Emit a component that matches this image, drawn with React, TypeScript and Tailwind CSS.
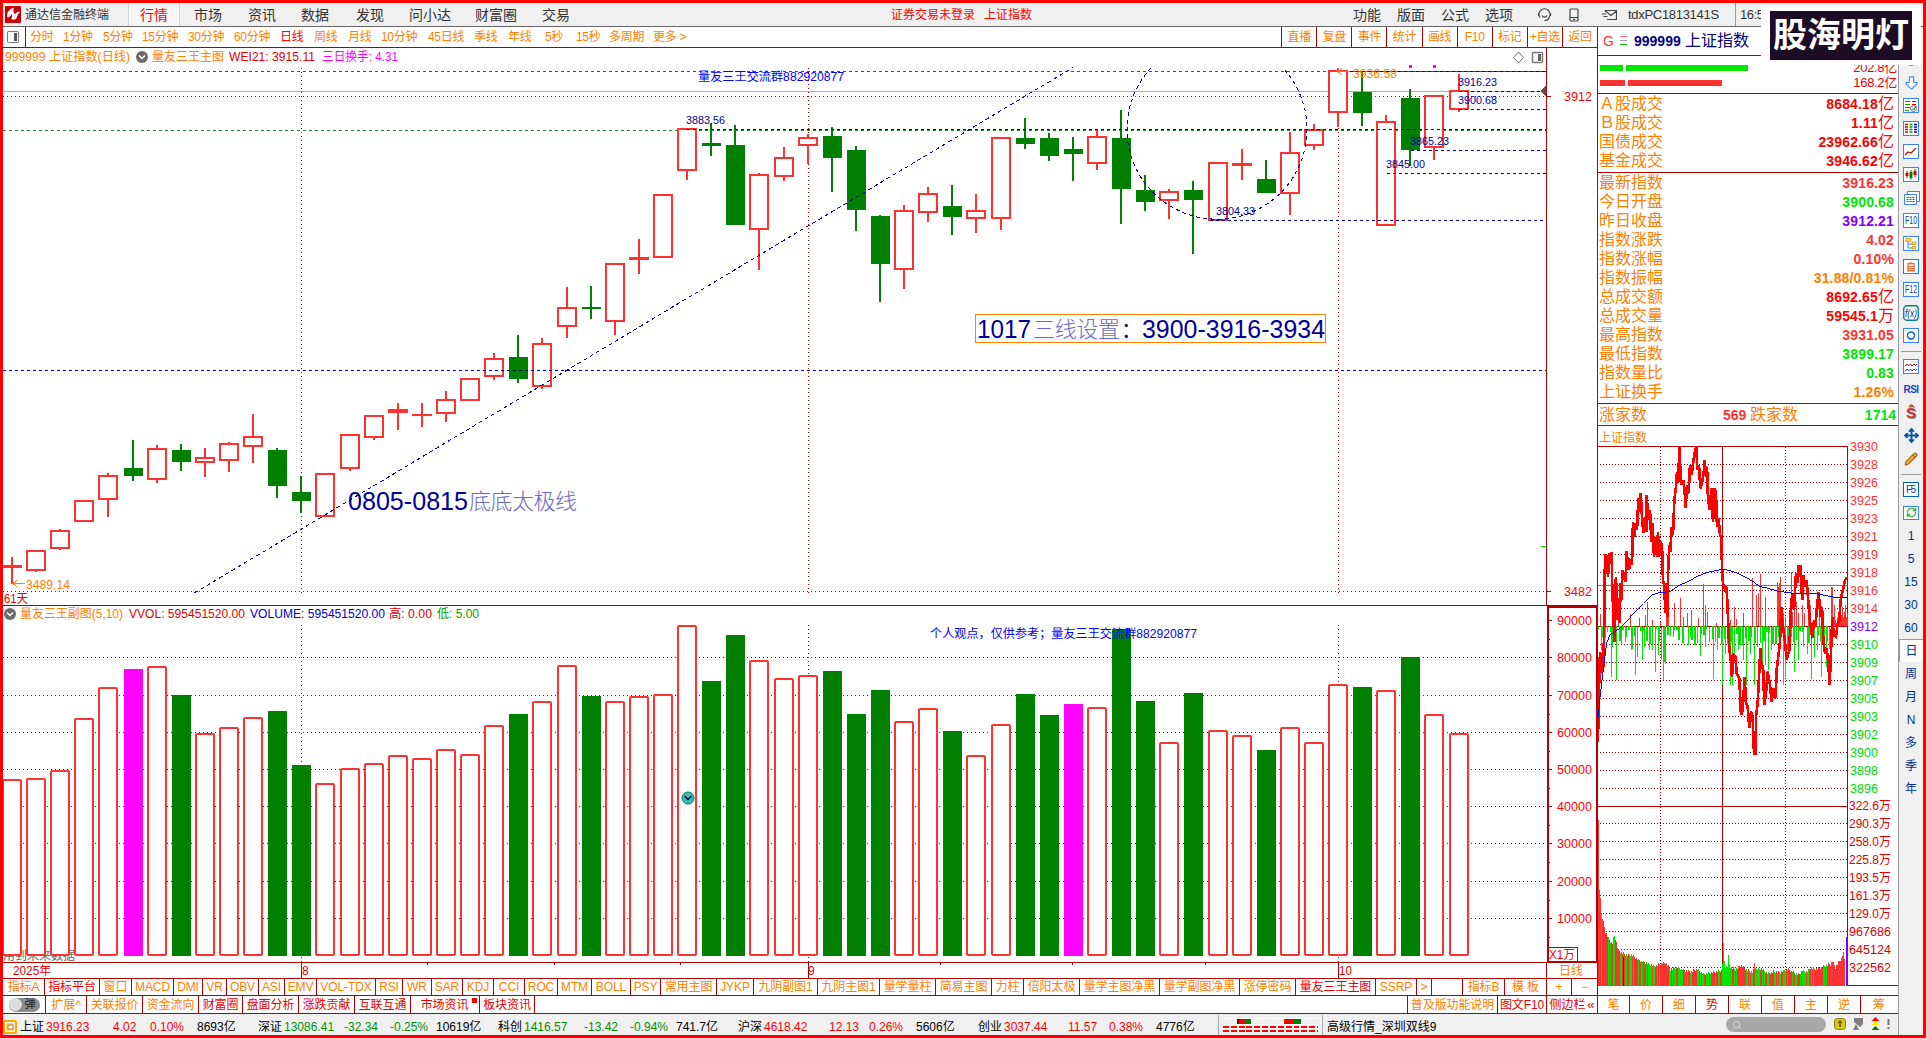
import type { ReactNode } from 'react';
import { ArrowBigDown, ArrowBigUp, Move, Pencil, RefreshCw, Search } from 'lucide-react';

const RED = '#ff3232';
const GREEN = '#008000';
const GRID = '#b00000';
const NAVY = '#000099';
const ORANGE = '#ff8000';

type Candle = [color: 'r' | 'g', top: number, bottom: number, high: number, low: number];

const CANDLES: Candle[] = [
  ['r', 565, 568, 557, 584], ['r', 550, 571, 550, 572], ['r', 530, 549, 529, 550], ['r', 500, 522, 500, 522],
  ['r', 475, 500, 473, 517], ['g', 468, 476, 440, 481], ['r', 448, 480, 445, 483], ['g', 450, 462, 444, 471],
  ['r', 457, 463, 448, 477], ['r', 443, 461, 442, 472], ['r', 436, 447, 414, 463], ['g', 450, 486, 448, 498],
  ['g', 492, 501, 476, 513], ['r', 473, 517, 473, 517], ['r', 434, 469, 434, 471], ['r', 415, 438, 415, 440],
  ['r', 409, 413, 403, 430], ['r', 414, 416, 403, 427], ['r', 399, 414, 391, 422], ['r', 378, 401, 378, 401],
  ['r', 358, 377, 353, 380], ['g', 357, 379, 335, 383], ['r', 343, 387, 338, 389], ['r', 307, 327, 287, 338],
  ['g', 307, 309, 286, 319], ['r', 263, 322, 263, 335], ['r', 257, 260, 239, 274], ['r', 194, 258, 194, 258],
  ['r', 128, 171, 128, 180], ['g', 143, 146, 123, 156], ['g', 145, 225, 125, 225], ['r', 174, 230, 173, 270],
  ['r', 157, 177, 147, 181], ['r', 137, 146, 134, 164], ['g', 136, 158, 127, 192], ['g', 150, 210, 146, 231],
  ['g', 216, 264, 215, 302], ['r', 210, 270, 205, 289], ['r', 193, 213, 187, 222], ['g', 206, 217, 185, 235],
  ['r', 210, 219, 194, 233], ['r', 137, 219, 137, 230], ['g', 138, 144, 118, 149], ['g', 138, 156, 133, 161],
  ['g', 149, 154, 137, 181], ['r', 136, 164, 130, 170], ['g', 138, 189, 110, 224], ['g', 190, 202, 175, 211],
  ['r', 191, 201, 189, 219], ['g', 190, 200, 181, 254], ['r', 162, 221, 162, 221], ['r', 163, 166, 149, 180],
  ['g', 179, 193, 160, 193], ['r', 152, 194, 132, 215], ['r', 129, 146, 124, 150], ['r', 70, 113, 68, 127],
  ['g', 92, 113, 71, 126], ['r', 121, 226, 115, 226], ['g', 98, 150, 89, 166], ['r', 95, 148, 95, 160],
  ['r', 90, 110, 74, 112],
];

// tops of the volume columns
const VOLUMES = [
  779, 778, 770, 718, 687, 669, 666, 695, 733, 727, 717, 711, 765, 783, 768, 763, 755, 758, 749, 754,
  725, 714, 701, 665, 696, 701, 696, 694, 625, 681, 635, 660, 678, 675, 671, 714, 690, 721, 708, 731,
  755, 724, 694, 715, 704, 707, 629, 701, 742, 693, 730, 735, 750, 727, 742, 684, 687, 690, 657, 714,
  733,
];
const MAGENTA_BARS = [5, 44];

const cx = (i: number) => Math.round(12 + 24.11 * i);

function Label({ x, y, w, fill, size = 12, children }: {
  x: number; y: number; w?: number; fill: string; size?: number; children: ReactNode;
}) {
  return (
    <text x={x} y={y + size * 0.36} fill={fill} fontSize={size} textLength={w} lengthAdjust="spacingAndGlyphs">
      {children}
    </text>
  );
}

function Dash({ x1, x2 = 1546, y, color = NAVY }: { x1: number; x2?: number; y: number; color?: string }) {
  return <path d={`M${x1} ${y + 0.5}H${x2}`} stroke={color} strokeDasharray="3 3" />;
}

function Collapse({ x, y }: { x: number; y: number }) {
  return (
    <g shapeRendering="auto">
      <circle cx={x} cy={y} r={6} fill="#6b6b6b" />
      <path d={`M${x - 3} ${y - 1.5}l3 3 3-3`} fill="none" stroke="#fff" strokeWidth={1.5} />
    </g>
  );
}

function PriceChart() {
  return (
    <svg className="block" width={1594} height={557} viewBox="3 48 1594 557" shapeRendering="crispEdges">
      <Label x={5} y={57} w={125} fill={ORANGE}>999999 上证指数(日线)</Label>
      <Collapse x={142} y={57} />
      <Label x={152} y={57} w={72} fill={ORANGE}>量友三王主图</Label>
      <Label x={229} y={57} w={86} fill="#e00000">WEI21: 3915.11</Label>
      <Label x={322} y={57} w={76} fill="#ff00ff">三日换手: 4.31</Label>

      <path d="M1518.5 52l5 5.5-5 5.5-5-5.5z" fill="none" stroke="#666" shapeRendering="auto" />
      <rect x={1532.5} y={52.5} width={10} height={10} rx={1} fill="none" stroke="#777" strokeWidth={1.5} shapeRendering="auto" />
      <rect x={1538} y={54} width={3} height={7} fill="#666" />

      <path d="M3 91.5H1546" stroke="#b0b0b0" />
      <path d="M3 96.5H1546M3 591.5H1546M301.5 68V593M808.5 68V593M1338.5 68V593" stroke={GRID} strokeDasharray="1 3" />
      <Dash x1={3} y={71} color="#b400b4" />
      <Dash x1={3} y={130} color="#2a8a2a" />

      {CANDLES.map(([color, top, bottom, high, low], i) => {
        const x = cx(i);
        const h = bottom - top;
        if (color === 'g') {
          return (
            <g key={i} fill={GREEN}>
              <rect x={x - 1} y={high} width={2} height={low - high} />
              <rect x={x - 9} y={top} width={19} height={h} />
            </g>
          );
        }
        return (
          <g key={i}>
            <rect x={x - 1} y={high} width={2} height={low - high} fill={RED} />
            {h < 5
              ? <rect x={x - 10} y={top} width={20} height={h} fill={RED} />
              : <rect x={x - 9} y={top + 1} width={18} height={h - 2} fill="#fff" stroke={RED} strokeWidth={2} />}
          </g>
        );
      })}

      <Dash x1={3} y={370} />
      <Dash x1={687} y={129} />
      <Dash x1={1210} y={220} />
      <Dash x1={1338} y={71} />
      <Dash x1={1459} y={91} />
      <Dash x1={1459} y={109} />
      <Dash x1={1411} y={150} />
      <Dash x1={1387} y={173} />
      <path d="M194.5 593L1073 67.5" stroke={NAVY} strokeDasharray="4 3.2" />
      <path d="M1151 68A90 90 0 1 0 1283 68" fill="none" stroke={NAVY} strokeDasharray="4 3.2" />

      <Label x={698} y={77} w={146} fill="#0000ff">量友三王交流群882920877</Label>
      <Label x={686} y={120} w={39} fill={NAVY} size={11}>3883.56</Label>
      <Label x={1216} y={211} w={39} fill={NAVY} size={11}>3804.33</Label>
      <Label x={1458} y={82} w={39} fill={NAVY} size={11}>3916.23</Label>
      <Label x={1458} y={100} w={39} fill={NAVY} size={11}>3900.68</Label>
      <Label x={1410} y={141} w={39} fill={NAVY} size={11}>3865.23</Label>
      <Label x={1386} y={164} w={39} fill={NAVY} size={11}>3845.00</Label>
      <path d="M1350 71.5H1338M1342 68l-4 3.5 4 3.5" fill="none" stroke={ORANGE} />
      <Label x={1353} y={74} w={44} fill={ORANGE}>3936.58</Label>
      <rect x={1409} y={65} width={3} height={3} fill="#ff00ff" />
      <rect x={1433} y={65} width={3} height={3} fill="#ff00ff" />

      <text x={348} y={510} fill={NAVY} fontSize={25} textLength={120} lengthAdjust="spacingAndGlyphs">0805-0815</text>
      <text x={469} y={509} fill="#6a6ac4" fontSize={22} fontWeight={300} textLength={108}>底底太极线</text>
      <rect x={975.5} y={314.5} width={350} height={28} fill="#fff" stroke={ORANGE} />
      <text x={977} y={338} fill={NAVY} fontSize={25} textLength={54} lengthAdjust="spacingAndGlyphs">1017</text>
      <text x={1033} y={337} fill="#6a6ac4" fontSize={22} fontWeight={300} textLength={87}>三线设置</text>
      <text x={1121} y={337} fill={NAVY} fontSize={21}>：</text>
      <text x={1142} y={338} fill={NAVY} fontSize={25} textLength={183} lengthAdjust="spacingAndGlyphs">3900-3916-3934</text>

      <path d="M25 583.5H13M17 580l-4 3.5 4 3.5" fill="none" stroke={ORANGE} />
      <Label x={26} y={585} w={44} fill={ORANGE}>3489.14</Label>
      <Label x={4} y={599} w={24} fill="#e00000">61天</Label>

      <path d="M1546 85v12l-5-6z" fill="#555" />
      <path d="M1541 546.5h5" stroke="#00e600" />
      <path d="M1546.5 48V605M1546 96.5h5M1546 591.5h5" stroke={GRID} />
      <Label x={1564} y={97} w={28} fill="#ff0000">3912</Label>
      <Label x={1564} y={592} w={28} fill="#ff0000">3482</Label>
    </svg>
  );
}

function VolumeChart() {
  return (
    <svg className="block" width={1594} height={373} viewBox="3 605 1594 373" shapeRendering="crispEdges">
      <Collapse x={10} y={614} />
      <Label x={20} y={614} w={103} fill={ORANGE}>量友三王副图(5,10)</Label>
      <Label x={129} y={614} w={116} fill="#e00000">VVOL: 595451520.00</Label>
      <Label x={250} y={614} w={135} fill="#0000d0">VOLUME: 595451520.00</Label>
      <Label x={389} y={614} w={43} fill="#e00000">高: 0.00</Label>
      <Label x={437} y={614} w={42} fill="#00a000">低: 5.00</Label>

      <path d="M301.5 625V962M808.5 625V962M1338.5 625V962" stroke={GRID} strokeDasharray="1 3" />
      {[1, 2, 3, 4, 5, 6, 7, 8].map((n) => (
        <path key={n} d={`M3 ${Math.round(955 - n * 37.2)}.5H1546`} stroke={GRID} strokeDasharray="1 3" />
      ))}
      <Label x={3} y={956} w={72} fill="#666">用到未来数据</Label>

      {VOLUMES.map((top, i) => {
        const x = cx(i);
        if (MAGENTA_BARS.includes(i)) return <rect key={i} x={x - 9} y={top} width={19} height={956 - top} fill="#ff00ff" />;
        if (CANDLES[i][0] === 'g') return <rect key={i} x={x - 9} y={top} width={19} height={956 - top} fill={GREEN} />;
        return <rect key={i} x={x - 9} y={top + 1} width={18} height={954 - top} rx={1} fill="#fff" stroke={RED} strokeWidth={2} shapeRendering="auto" />;
      })}

      <circle cx={688} cy={798} r={6} fill="#2fc4b0" stroke="#0b6d62" shapeRendering="auto" />
      <path d="M684.5 796l3.5 3.5 3.5-3.5" fill="none" stroke="#000033" strokeWidth={1.5} shapeRendering="auto" />
      <Label x={930} y={634} w={267} fill="#0000ff">个人观点，仅供参考；量友三王交流群882920877</Label>

      <path d="M3 605.5H1597" stroke={GRID} />
      <rect x={1548} y={607} width={49} height={355} fill="none" stroke={GRID} strokeWidth={2} />
      {[9, 8, 7, 6, 5, 4, 3, 2, 1].map((n) => {
        const y = Math.round(955 - n * 37.2);
        return (
          <g key={n}>
            <path d={`M1549 ${y}.5h3M1549 ${y + 19}.5h1`} stroke={GRID} />
            <Label x={1557} y={y + 0.5} w={35} fill="#ff0000">{n * 10000}</Label>
          </g>
        );
      })}
      <rect x={1548.5} y={947.5} width={29} height={14} fill="#fff" stroke={GRID} />
      <Label x={1549} y={955} w={26} fill="#ff0000">X1万</Label>

      <path d="M3 962.5H1597M301.5 962V978M808.5 962V978M1338.5 962V978M1546.5 962V978" stroke={GRID} />
      <path d="M427.5 963v2M554.5 963v2M680.5 963v2M940.5 963v2M1072.5 963v2M1205.5 963v2" stroke={GRID} />
      <Label x={13} y={971} w={38} fill="#e00000">2025年</Label>
      <Label x={302} y={971} fill="#e00000">8</Label>
      <Label x={808} y={971} fill="#e00000">9</Label>
      <Label x={1339} y={971} w={13} fill="#e00000">10</Label>
      <Label x={1559} y={971} w={24} fill={ORANGE}>日线</Label>
    </svg>
  );
}

// intraday curves are kept at three units per pixel, origin 1580,420
const PRICE_LINE =
  '53,967 56,890 58,760 60,695 64,760 68,700 70,740 73,600 75,402 78,455 80,405 84,470 88,398 92,432 95,395 97,520 99,555 101,600 103,665 105,520 108,470 110,545 113,600 116,535 119,610 122,490 125,540 127,450 131,480 134,455 137,485 140,392 144,440 147,450 151,425 156,435 159,305 163,350 167,310 171,330 175,235 179,275 182,218 186,290 190,340 195,290 199,335 200,225 205,300 210,270 214,365 218,310 222,410 226,350 231,410 234,335 237,410 242,365 246,375 249,480 253,500 256,580 260,490 262,590 264,460 268,375 271,395 275,320 279,345 283,240 288,200 291,155 295,185 298,80 301,150 305,195 310,180 314,215 317,265 321,195 326,220 330,135 335,165 340,125 345,95 349,80 352,150 357,135 361,205 367,185 371,160 374,120 378,170 381,140 384,235 389,270 394,205 399,305 404,205 408,220 411,320 416,295 420,345 424,355 426,440 429,490 436,510 440,500 443,570 445,620 448,690 452,715 456,770 461,705 466,710 470,760 478,775 483,885 488,870 494,770 498,850 503,860 508,925 513,875 518,890 522,1000 527,1000 528,890 533,850 537,770 541,685 545,745 549,735 553,855 558,820 563,755 570,795 575,845 580,805 585,830 587,835 590,750 596,700 600,665 604,560 607,605 611,635 615,665 620,720 628,690 633,560 637,520 642,570 648,460 652,490 656,440 661,440 664,500 667,540 670,465 675,500 680,480 685,545 690,605 697,655 702,600 706,620 711,560 716,515 721,590 726,560 730,660 735,700 740,685 745,730 749,795 752,720 757,590 761,645 768,650 773,610 778,600 782,540 786,520 791,500 795,480 802,472';
const AVERAGE_LINE =
  '55,890 60,830 65,790 72,730 80,670 90,645 105,635 120,625 140,605 165,575 190,550 215,525 240,517 270,515 300,495 325,485 350,470 380,458 410,451 430,448 450,452 470,458 490,468 520,485 540,500 565,505 590,513 620,517 650,522 690,519 720,523 745,528 775,534 802,532';
const UP_TICKS =
  '61,582 76,590 113,580 151,583 178,595 195,585 202,545 215,600 240,605 259,565 262,560 265,505 282,548 299,535 310,590 321,578 332,570 353,595 370,492 376,555 381,575 409,608 450,600 462,560 468,596 490,578 516,475 528,525 534,520 541,462 555,530 590,485 593,500 596,490 600,470 604,560 607,570 610,580 615,590 633,455 637,575 643,540 649,545 655,580 667,555 673,580 684,515 690,555 700,610 706,595 716,570 722,600 754,500 757,500 762,555 766,600 772,595 776,580 779,570 782,585 785,560 788,590 791,575 794,555 797,590 800,580'
    .split(' ').map((p) => p.split(',').map(Number));
const DOWN_TICKS =
  '62,690 69,700 94,770 97,680 109,780 123,670 138,650 152,690 157,685 166,765 172,710 187,720 193,680 208,690 215,690 226,755 235,705 244,720 250,780 253,725 256,730 280,650 295,660 308,660 330,650 345,670 361,707 375,680 388,665 400,775 412,690 427,795 436,700 449,795 457,795 463,700 475,690 488,720 499,795 511,700 523,795 532,680 547,765 556,735 565,750 572,690 610,795 616,770 620,690 625,680 643,755 655,720 668,680 682,700 694,775 703,710 712,690 724,770 733,680 739,740 748,685'
    .split(' ').map((p) => p.split(',').map(Number));
const MINUTE_VOLUME = [
  [54, 243], [57, 450], [60, 470], [63, 522], [69, 547], [75, 575], [82, 590], [88, 603], [96, 610], [101, 585],
  [107, 603], [113, 630], [120, 636], [135, 645], [155, 645], [170, 658], [185, 665], [200, 670], [220, 678],
  [240, 672], [255, 668], [270, 688], [290, 683], [310, 690], [330, 695], [350, 687], [370, 703], [390, 698],
  [410, 695], [425, 690], [429, 612], [433, 680], [441, 680], [444, 648], [448, 680], [465, 690], [480, 676], [500, 690],
  [518, 698], [522, 670], [528, 688], [545, 687], [560, 700], [580, 695], [600, 697], [620, 687], [640, 697],
  [655, 705], [665, 692], [680, 695], [690, 682], [710, 688], [730, 680], [740, 675], [752, 672], [755, 663],
  [765, 682], [775, 665], [783, 655], [791, 633], [795, 733], [800, 733],
];

function minuteTop(x: number) {
  const i = MINUTE_VOLUME.findIndex(([px]) => px > x);
  if (i === 0) return MINUTE_VOLUME[0][1];
  if (i < 0) return 733;
  const [x0, y0] = MINUTE_VOLUME[i - 1];
  const [x1, y1] = MINUTE_VOLUME[i];
  return y0 + ((y1 - y0) * (x - x0)) / (x1 - x0);
}

const PRICE_AXIS = [3930, 3928, 3926, 3925, 3923, 3921, 3919, 3918, 3916, 3914, 3912, 3910, 3909, 3907, 3905, 3903, 3902, 3900, 3898, 3896];
const VOLUME_AXIS = ['322.6万', '290.3万', '258.0万', '225.8万', '193.5万', '161.3万', '129.0万', '967686', '645124', '322562'];

function IntradayChart() {
  return (
    <svg className="block" width={300} height={569} viewBox="1598 426 300 569" shapeRendering="crispEdges">
      <Label x={1599} y={438} w={48} fill={ORANGE}>上证指数</Label>
      {PRICE_AXIS.map((v, i) => (
        <g key={v}>
          {i > 0 && i !== 10 && <path d={`M1600 ${446 + i * 18}.5H1847`} stroke="#900000" strokeDasharray="1 2" />}
          <Label x={1850} y={447 + i * 18} w={28} fill={i < 10 ? RED : i === 10 ? '#8000ff' : '#00d800'}>{v}</Label>
        </g>
      ))}
      {VOLUME_AXIS.map((v, i) => (
        <g key={v}>
          {i > 0 && <path d={`M1600 ${805 + i * 18}.5H1847`} stroke="#900000" strokeDasharray="1 2" />}
          <Label x={1849} y={806 + i * 18} w={42} fill="#e00000">{v}</Label>
        </g>
      ))}
      <path d="M1660.5 447V985M1785.5 447V985" stroke="#900000" strokeDasharray="1 2" />
      <path d="M1598 446.5H1847.5V985.5H1898M1722.5 446V985M1598 626.5H1847M1598 806.5H1847" fill="none" stroke={GRID} />
      <path d="M1598 585.5H1847" stroke="#707878" />

      {Array.from({ length: 83 }, (_, i) => {
        const x = 1598 + i * 3;
        const len = 3 + ((i * 37 + ((i * i) % 11) * 5) % 17);
        return x < 1832 && i % 8 !== 5 && <rect key={i} x={x} y={626} width={i % 3 ? 2 : 1} height={len} fill="#00e600" />;
      })}
      {UP_TICKS.map(([x, y]) => <rect key={x} x={Math.round(1580 + x / 3)} y={420 + y / 3} width={1} height={(617 - y) / 3} fill={RED} />)}
      {DOWN_TICKS.map(([x, y]) => <rect key={x} x={Math.round(1580 + x / 3)} y={627} width={1} height={(y - 620) / 3} fill="#00e600" />)}

      {Array.from({ length: 247 }, (_, i) => {
        const x = 1598 + i;
        const top = Math.round(740 + (minuteTop((x - 1580) * 3) + ((i * 7) % 5) * 2 - 4) / 3);
        const spike = (x > 1721 && x < 1730) || (x > 1600 && x < 1602);
        const green = spike || (x > 1606 && (i * 13 + ((i * i) % 7) * 3) % 11 < (x < 1828 ? 5 : 0));
        return <rect key={i} x={x} y={top} width={1} height={986 - top} fill={green ? '#00e600' : RED} />;
      })}
      <rect x={1623} y={957} width={1} height={29} fill="#4000ff" />
      <rect x={1846} y={937} width={2} height={49} fill="#8000ff" />

      <g transform="translate(1580 420) scale(0.33333)" fill="none">
        <polyline points={PRICE_LINE} stroke="#ff0000" strokeWidth={8} />
        <polyline points={AVERAGE_LINE} stroke="#0000ff" strokeWidth={3} />
      </g>
    </svg>
  );
}

const MENU = [
  ['市场', 'w-[54px]'], ['资讯', 'w-[53px]'], ['数据', 'w-[55px]'], ['发现', 'w-[53px]'],
  ['问小达', 'w-[66px]'], ['财富圈', 'w-[67px]'], ['交易', 'w-[50px]'],
];

function MenuBar() {
  return (
    <div className="flex h-6 shrink-0 items-center border-b border-[#666] bg-[#f0f0f0] text-[14px] text-[#333]">
      <svg className="ml-0.5 shrink-0" width={16} height={17} viewBox="0 0 16 17">
        <rect width={16} height={17} rx={1} fill="#c8000c" />
        <path d="M9 1.500C4 3 1 7 2.500 11.500c1.500.5 3-1 4-3.500 1 1 1 3-.5 5 3 1.500 5 .5 6-2 .5-1.500 1.500-4 3-5-2-.5-4 .5-5 2.500C8.500 6.500 7.500 4 9 1.500z" fill="#fff" />
      </svg>
      <span className="ml-1 w-[103px] shrink-0 text-[12px]">通达信金融终端</span>
      <span className="flex h-full w-[52px] shrink-0 items-center justify-center border-x border-[#d4d4d4] bg-[#f6f6f6] text-[#ff0000]">行情</span>
      <div className="ml-3.5 flex w-[697px] shrink-0">
        {MENU.map(([name, width]) => <span key={name} className={`${width} whitespace-nowrap`}>{name}</span>)}
      </div>
      <span className="w-[93px] shrink-0 text-[12px] text-[#ff0000]">证券交易未登录</span>
      <span className="w-[369px] shrink-0 text-[12px] text-[#ff0000]">上证指数</span>
      {['功能', '版面', '公式', '选项'].map((t) => <span key={t} className="w-11 shrink-0">{t}</span>)}
      <svg className="ml-2 shrink-0" width={15} height={15} viewBox="0 0 15 15" fill="none" stroke="#444" strokeWidth={1.2}>
        <path d="M3 10.5A5.5 5.5 0 1 1 12 10.5M5 8.500c1 2.200 4 2.200 5 0M12 10.500c-.5 2-2 3-4.500 3M1.500 6v3M13.500 6v3" />
      </svg>
      <svg className="ml-[17px] shrink-0" width={10} height={14} viewBox="0 0 10 14" fill="none" stroke="#444" strokeWidth={1.2}>
        <rect x={1} y={1} width={8} height={12} rx={1} />
        <path d="M1 9.500h8M4 11.300h2" />
      </svg>
      <svg className="ml-[23px] shrink-0" width={15} height={12} viewBox="0 0 15 12" fill="none" stroke="#444" strokeWidth={1.2}>
        <path d="M3.500 3V1.500h11v9H5M3.500 2l5.500 4.500L14.500 2M0 5h4M1.500 7.500h4" />
      </svg>
      <span className="ml-[11px] w-[107px] shrink-0 text-[13px] tracking-[-0.3px]">tdxPC1813141S</span>
      <span className="flex h-full items-center border-l border-[#999] pl-1 text-[13px] tracking-[-0.4px]">16:5</span>
    </div>
  );
}

const PERIODS = [
  ['分时', 'w-[33px]'], ['1分钟', 'w-[40px]'], ['5分钟', 'w-[39px]'], ['15分钟', 'w-[46px]'], ['30分钟', 'w-[46px]'],
  ['60分钟', 'w-[46px]'], ['日线', 'w-[34px]'], ['周线', 'w-[34px]'], ['月线', 'w-[33px]'], ['10分钟', 'w-[47px]'],
  ['45日线', 'w-[46px]'], ['季线', 'w-[34px]'], ['年线', 'w-[37px]'], ['5秒', 'w-[31px]'], ['15秒', 'w-[33px]'],
  ['多周期', 'w-[44px]'], ['更多 >', 'w-[40px]'],
];

function PeriodBar() {
  return (
    <div className="flex h-[21px] shrink-0 items-center border-b border-[#b00000] text-[12px] tracking-[-0.3px] text-[#ff8000]">
      <svg className="ml-1 shrink-0" width={12} height={12} viewBox="0 0 12 12">
        <rect x={0.5} y={0.5} width={11} height={11} rx={1} fill="#fff" stroke="#777" />
        <rect x={7} y={2} width={3} height={8} fill="#555" />
      </svg>
      <span className="ml-1.5 h-full border-l border-[#b00000]" />
      <div className="ml-1 flex">
        {PERIODS.map(([name, width]) => (
          <span key={name} className={`${width} whitespace-nowrap ${name === '日线' ? 'text-[#ff0000]' : ''}`}>{name}</span>
        ))}
      </div>
      <div className="ml-auto flex h-full">
        {['直播', '复盘', '事件', '统计', '画线', 'F10', '标记', '+自选', '返回'].map((t) => (
          <span key={t} className="flex w-[35.1px] items-center justify-center border-l border-[#b00000] whitespace-nowrap">{t}</span>
        ))}
      </div>
    </div>
  );
}

const INDICATORS = [
  ['指标A', 'w-[42px]'], ['指标平台', 'w-[55px]'], ['窗口', 'w-[32px]'], ['MACD', 'w-[42px]'], ['DMI', 'w-[29px]'],
  ['VR', 'w-[24px]'], ['OBV', 'w-[32px]'], ['ASI', 'w-[26px]'], ['EMV', 'w-[32px]'], ['VOL-TDX', 'w-[59px]'],
  ['RSI', 'w-[27px]'], ['WR', 'w-[29px]'], ['SAR', 'w-[31px]'], ['KDJ', 'w-[31px]'], ['CCI', 'w-[31px]'],
  ['ROC', 'w-[33px]'], ['MTM', 'w-[34px]'], ['BOLL', 'w-[39px]'], ['PSY', 'w-[30px]'], ['常用主图', 'w-[56px]'],
  ['JYKP', 'w-[37px]'], ['九阴副图1', 'w-[64px]'], ['九阴主图1', 'w-[62px]'], ['量学量柱', 'w-[56px]'],
  ['简易主图', 'w-[56px]'], ['力柱', 'w-[32px]'], ['倍阳太极', 'w-[56px]'], ['量学主图净黑', 'w-[80px]'],
  ['量学副图净黑', 'w-[80px]'], ['涨停密码', 'w-[56px]'], ['量友三王主图', 'w-[80px]'], ['SSRP', 'w-[41px]'],
  ['>', 'w-[15px]'], ['', 'w-[31px]'], ['指标B', 'w-[42px]'], ['模 板', 'w-[42px]'], ['+', 'w-[25px]'], ['−', 'w-[26px]'],
];

function Cell({ width, red, last, children }: { width: string; red?: boolean; last?: boolean; children: ReactNode }) {
  return (
    <span className={`${width} flex shrink-0 items-center justify-center whitespace-nowrap ${last ? '' : 'border-r border-[#b00000]'} ${red ? 'text-[#e60000]' : ''}`}>
      {children}
    </span>
  );
}

function BottomTabs() {
  return (
    <div className="text-[12px] tracking-[-0.1px] text-[#ff8000]">
      <div className="flex h-[17px] border-t border-[#b00000]">
        {INDICATORS.map(([name, width], i) => (
          <Cell key={i} width={width} red={name === '指标平台' || name === '量友三王主图'} last={i === INDICATORS.length - 1}>{name}</Cell>
        ))}
      </div>
      <div className="flex h-[19px] border-y border-[#b00000]">
        <Cell width="w-[43px]">
          <span className="flex h-[14px] w-[31px] items-center justify-between rounded-full bg-[#8c8c8c] pr-1 text-[11px] text-[#222]">
            <span className="h-[13px] w-[13px] rounded-full bg-[#dcdcdc]" />弹
          </span>
        </Cell>
        <Cell width="w-[41px]">扩展^</Cell>
        <Cell width="w-[56px]">关联报价</Cell>
        <Cell width="w-[56px]">资金流向</Cell>
        <Cell width="w-[44px]" red>财富圈</Cell>
        <Cell width="w-[56px]" red>盘面分析</Cell>
        <Cell width="w-[56px]" red>涨跌贡献</Cell>
        <Cell width="w-[56px]" red>互联互通</Cell>
        <Cell width="w-[69px]" red>
          <span className="ml-2">市场资讯</span><span className="mb-2 ml-1 h-[5px] w-[5px] bg-[#ff0000]" />
        </Cell>
        <Cell width="w-[55px]" red>板块资讯</Cell>
        <div className="grow border-r border-[#b00000]" />
        <Cell width="w-[90px]">普及版功能说明</Cell>
        <Cell width="w-[49px]" red>图文F10</Cell>
        <Cell width="w-[50px]" red last>侧边栏<span className="ml-0.5 text-[13px]">«</span></Cell>
      </div>
    </div>
  );
}

const QUOTES = [
  ['Ａ股成交', '8684.18亿', 'text-[#ff0000]'],
  ['Ｂ股成交', '1.11亿', 'text-[#ff0000]'],
  ['国债成交', '23962.66亿', 'text-[#ff0000]'],
  ['基金成交', '3946.62亿', 'text-[#ff0000]'],
];
const DETAILS = [
  ['最新指数', '3916.23', 'text-[#ff3232]'],
  ['今日开盘', '3900.68', 'text-[#00e600]'],
  ['昨日收盘', '3912.21', 'text-[#8000ff]'],
  ['指数涨跌', '4.02', 'text-[#ff3232]'],
  ['指数涨幅', '0.10%', 'text-[#ff3232]'],
  ['指数振幅', '31.88/0.81%', 'text-[#ff8000]'],
  ['总成交额', '8692.65亿', 'text-[#ff0000]'],
  ['总成交量', '59545.1万', 'text-[#ff0000]'],
  ['最高指数', '3931.05', 'text-[#ff3232]'],
  ['最低指数', '3899.17', 'text-[#00e600]'],
  ['指数量比', '0.83', 'text-[#00e600]'],
  ['上证换手', '1.26%', 'text-[#ff8000]'],
];

function QuoteRow({ row: [name, value, color] }: { row: string[] }) {
  const unit = /[亿万]$/.test(value) ? value.slice(-1) : '';
  return (
    <div className="flex h-[19px] items-center justify-between pr-1 pl-[1px] text-[16px] leading-none text-[#ff8000]">
      <span>{name}</span>
      <span className={`flex items-center ${color}`}>
        <b className="text-[14px] tracking-[0.15px]">{unit ? value.slice(0, -1) : value}</b>
        <span className="text-[16px]">{unit}</span>
      </span>
    </div>
  );
}

function QuotePanel() {
  return (
    <div className="flex w-[301px] shrink-0 flex-col border-l border-[#b00000]">
      <div className="flex h-[29px] shrink-0 items-center border-b border-[#b00000] pb-px pl-[5px] text-[16px] text-[#000080]">
        <span className="w-[17px] text-[14px] text-[#ff3232]">G</span>
        <span className="mr-[7px] flex w-[7px] shrink-0 flex-col gap-[3px]">
          <i className="h-px bg-[#ff8080]" /><i className="h-px bg-[#999]" /><i className="h-px bg-[#00c000]" />
        </span>
        <b className="w-[51px] text-[14px]">999999</b>
        <span>上证指数</span>
      </div>
      <div className="flex h-[38px] shrink-0 flex-col justify-end border-b border-[#b00000] pr-[1px] pb-[3px] pl-0.5 text-[13px] leading-[15px] tracking-[-0.3px] text-[#e60000]">
        <div className="flex h-[15px] items-center gap-[3px]">
          <i className="h-1.5 w-[23px] bg-[#00e600]" /><i className="h-1.5 w-[122px] bg-[#00e600]" />
          <span className="ml-auto">202.8亿</span>
        </div>
        <div className="flex h-[15px] items-center gap-[3px]">
          <i className="h-1.5 w-[25px] bg-[#ff3232]" /><i className="h-1.5 w-[94px] bg-[#ff3232]" />
          <span className="ml-auto">168.2亿</span>
        </div>
      </div>
      <div className="h-[79px] shrink-0 border-b border-[#b00000]">
        {QUOTES.map((row) => <QuoteRow key={row[0]} row={row} />)}
      </div>
      <div className="h-[231px] shrink-0 border-b border-[#b00000]">
        {DETAILS.map((row) => <QuoteRow key={row[0]} row={row} />)}
      </div>
      <div className="flex h-[22px] shrink-0 items-center border-b border-[#b00000] pl-[1px] text-[16px] text-[#ff8000]">
        <span className="w-[124px]">涨家数</span>
        <b className="w-[27px] text-[14px] text-[#ff3232]">569</b>
        <span>跌家数</span>
        <b className="mr-0.5 ml-auto text-[14px] text-[#00e600]">1714</b>
      </div>
      <IntradayChart />
      <div className="flex h-[19px] border-y border-[#b00000] text-[12px] text-[#ff8000]">
        {['笔', '价', '细', '势', '联', '值', '主', '逆', '筹'].map((t, i) => (
          <Cell key={t} width={i === 0 ? 'w-[32px]' : i === 8 ? 'w-[36px]' : 'w-[33px]'} red={t === '势'} last={i === 8}>{t}</Cell>
        ))}
      </div>
    </div>
  );
}

const FLAG: Record<string, string> = { k: 'text-black', r: 'text-[#ff0000]', g: 'text-[#009000]' };
const TICKER = [
  ['上证', 'k', 'w-[26px]'], ['3916.23', 'r', 'w-[67px]'], ['4.02', 'r', 'w-[37px]'], ['0.10%', 'r', 'w-[47px]'], ['8693亿', 'k', 'w-[61px]'],
  ['深证', 'k', 'w-[26px]'], ['13086.41', 'g', 'w-[60px]'], ['-32.34', 'g', 'w-[46px]'], ['-0.25%', 'g', 'w-[46px]'], ['10619亿', 'k', 'w-[62px]'],
  ['科创', 'k', 'w-[26px]'], ['1416.57', 'g', 'w-[60px]'], ['-13.42', 'g', 'w-[46px]'], ['-0.94%', 'g', 'w-[46px]'], ['741.7亿', 'k', 'w-[62px]'],
  ['沪深', 'k', 'w-[26px]'], ['4618.42', 'r', 'w-[65px]'], ['12.13', 'r', 'w-[40px]'], ['0.26%', 'r', 'w-[47px]'], ['5606亿', 'k', 'w-[62px]'],
  ['创业', 'k', 'w-[26px]'], ['3037.44', 'r', 'w-[64px]'], ['11.57', 'r', 'w-[41px]'], ['0.38%', 'r', 'w-[47px]'], ['4776亿', 'k', 'w-[62px]'],
];

function StatusBar() {
  return (
    <div className="flex h-[21px] shrink-0 items-center bg-[#f0f0f0] pt-1 text-[12px] text-black">
      <svg className="mr-[3px] shrink-0" width={14} height={14} viewBox="0 0 14 14">
        <rect width={14} height={14} rx={2} fill="#ffa800" />
        <rect x={2.5} y={2.5} width={9} height={9} fill="#ffd97a" stroke="#fff" />
        <rect x={5} y={5} width={5} height={4} fill="#fff" stroke="#d07000" />
      </svg>
      {TICKER.map(([text, flag, width], i) => (
        <span key={i} className={`${width} ${FLAG[flag]} shrink-0 whitespace-nowrap`}>{text}</span>
      ))}
      <svg className="-mt-1 shrink-0 border-x border-[#aaa]" width={105} height={20} viewBox="1218 1015 105 20" shapeRendering="crispEdges">
        <path d="M1222 1018.5h47M1271 1018.5h48M1222 1024.5h97" stroke="#fff" />
        <rect x={1236} y={1019} width={9} height={5} fill="#f00000" />
        <rect x={1236} y={1019} width={2} height={5} fill="#700000" />
        <rect x={1245} y={1019} width={6} height={5} fill={GREEN} />
        <rect x={1284} y={1019} width={10} height={5} fill="#f00000" />
        <rect x={1294} y={1019} width={8} height={5} fill={GREEN} />
        <path d="M1222 1027h97M1222 1031h97" stroke="#ff0000" strokeWidth={2} strokeDasharray="6 2" />
      </svg>
      <span className="ml-1 whitespace-nowrap">高级行情_深圳双线9</span>
      <div className="-mt-1 ml-auto flex h-[15px] w-[100px] items-center rounded-full bg-[#a8a8a8] pl-1.5">
        <Search size={10} color="#ddd" />
      </div>
      <svg className="-mt-1 mr-1 ml-2 shrink-0" width={60} height={15} viewBox="1834 1018 60 15">
        <rect x={1834.5} y={1019.5} width={11} height={11} rx={3} fill="#d8c820" stroke="#8a8000" />
        <path d="M1840 1021l3 3h-2v4h-2v-4h-2z" fill="#6b6400" />
        <path d="M1854 1019h9v6l-3 3-6-5zM1853 1031l3-6 3 6z" fill="#7d7d7d" />
        <path d="M1875.5 1018l4 4h-8z" fill="#ff0000" />
        <path d="M1875.5 1022l4 4h-8z" fill="#ffee00" />
        <path d="M1875.5 1027l4 4h-8z" fill="#008000" />
        <path d="M1888.5 1020v6M1888.5 1028v2" stroke="#777" strokeWidth={2} />
      </svg>
    </div>
  );
}

function Boxed({ children, color = '#3b82f6' }: { children?: ReactNode; color?: string }) {
  return (
    <svg width={16} height={16} viewBox="0 0 16 16" fontSize={10}>
      <rect x={0.5} y={0.5} width={15} height={14} fill="#fff" stroke={color} />
      {children}
    </svg>
  );
}

const TOOLS: ReactNode[] = [
  <ArrowBigUp size={17} color="#3b82f6" fill="#fff" strokeWidth={1.6} />,
  <ArrowBigDown size={17} color="#3b82f6" fill="#fff" strokeWidth={1.6} />,
  <Boxed>
    <path d="M2 3.5h5M2 6.5h5M2 9.500h5M2 12.500h4" stroke="#00a000" />
    <path d="M9 3.500h4M9 6.500h4" stroke="#e00000" />
    <circle cx={10.5} cy={10.5} r={3} fill="#eee" stroke="#777" />
    <path d="M9 10.500l1.500 1.500 3-4" fill="none" stroke="#555" />
  </Boxed>,
  <Boxed>
    <path d="M2 3.5h3M2 6h3M2 8.5h3M2 11h3" stroke="#e00000" strokeWidth={1.5} />
    <path d="M6.5 3.5h3M6.5 6h3M6.5 8.5h3M6.5 11h3" stroke="#00a000" strokeWidth={1.5} />
    <path d="M11 3.5h3M11 6h3M11 8.5h3M11 11h3" stroke="#0000d0" strokeWidth={1.5} />
  </Boxed>,
  <Boxed><path d="M2 11l3-3 3 1 5-5" fill="none" stroke="#e00000" strokeWidth={1.3} /></Boxed>,
  <Boxed>
    <path d="M4 4v7M12 2v8" stroke="#e00000" />
    <path d="M8 3v10" stroke="#008000" />
    <path d="M4 6v3M12 4v4" stroke="#e00000" strokeWidth={3} />
    <path d="M8 5v6" stroke="#008000" strokeWidth={3} />
  </Boxed>,
  <svg width={17} height={16} viewBox="0 0 17 16" fill="#fff" stroke="#3b82f6">
    <path d="M4.5 1.5h12v10h-12z" />
    <path d="M1.5 4.5h12v10h-12z" />
    <path d="M3.5 7.5h8M3.5 9.5h8M3.5 11.5h8" stroke="#555" strokeDasharray="2 1" />
  </svg>,
  <Boxed><text x={2} y={11} fill="#0040c0" textLength={12} lengthAdjust="spacingAndGlyphs">F10</text></Boxed>,
  <Boxed>
    <path d="M5 5v7h4M5 8h4" fill="none" stroke="#3b82f6" />
    <path d="M3 2.5h5v3H3zM9 6h4v2.500H9zM9 10.500h4V13H9z" fill="#ffd84a" stroke="#c89000" strokeWidth={0.7} />
  </Boxed>,
  <Boxed color="#0090e0"><text x={3} y={11.5} fontWeight={700} fill="#ff6a2a">自</text></Boxed>,
  <Boxed><text x={2} y={11} fill="#0040c0" textLength={12} lengthAdjust="spacingAndGlyphs">F12</text></Boxed>,
  <svg width={16} height={16} viewBox="0 0 16 16">
    <rect x={0.75} y={0.75} width={14.5} height={14.5} rx={3} fill="#fff" stroke="#008080" strokeWidth={1.3} />
    <text x={2} y={11.5} fontSize={10} fontStyle="italic" fill="#0030a0" textLength={12} lengthAdjust="spacingAndGlyphs">f(x)</text>
  </svg>,
  <Boxed><circle cx={8} cy={7.5} r={3.5} fill="none" stroke="#0060d0" strokeWidth={1.4} /></Boxed>,
  null,
  <Boxed>
    <path d="M2 7l2-2 1.500 2 2-2L9 7l2-2 1.500 1.500L14 5" fill="none" stroke="#e00000" />
    <path d="M2 12l2-2 1.500 2 2-2L9 12l2-2 1.500 1.500L14 10" fill="none" stroke="#2040e0" />
  </Boxed>,
  <b className="text-[10px] tracking-tighter text-[#1c3fd0]">RSI</b>,
  <b className="text-[15px] text-[#d03030] [text-shadow:1px_1px_0_#888]">Ŝ</b>,
  <Move size={15} color="#0050b8" strokeWidth={3} />,
  <Pencil size={14} color="#a06a20" fill="#ffb030" />,
  null,
  <Boxed color="#0060c8"><text x={3} y={11} fill="#0040c0" textLength={10}>F5</text></Boxed>,
  <span className="flex h-[14px] w-4 items-center justify-center border border-[#3b82f6] bg-white"><RefreshCw size={11} color="#40b040" strokeWidth={3} /></span>,
  '1', '5', '15', '30', '60', '日', '周', '月', 'N', '多', '季', '年',
];

function ToolStrip() {
  return (
    <div className="flex w-[25px] shrink-0 flex-col border-l border-[#999] bg-[#f0f0f0] pt-[21px] text-[12px] text-[#003090]">
      {TOOLS.map((tool, i) =>
        tool === null
          ? <div key={i} className="mx-0.5 my-[3.5px] h-px shrink-0 bg-[#999]" />
          : <div key={i} className={`flex h-[23px] shrink-0 items-center justify-center leading-none ${tool === '日' ? 'border-t border-l border-[#999] bg-[#fafafa]' : ''}`}>{tool}</div>
      )}
    </div>
  );
}

export default function App() {
  return (
    <div className="relative flex h-[1038px] w-[1926px] flex-col overflow-hidden border-[3px] border-[#ff0000] bg-white font-['Liberation_Sans','Noto_Sans_CJK_SC',sans-serif] leading-none">
      <MenuBar />
      <div className="flex grow">
        <div className="flex w-[1895px] shrink-0 flex-col">
          <div className="flex">
            <div className="flex w-[1594px] shrink-0 flex-col">
              <PeriodBar />
              <PriceChart />
              <VolumeChart />
              <BottomTabs />
            </div>
            <QuotePanel />
          </div>
          <StatusBar />
        </div>
        <ToolStrip />
      </div>
      <div className="absolute top-0.5 right-[2px] flex h-[60px] w-[160px] items-center justify-center bg-white">
        <div className="flex h-[49px] w-[142px] items-center justify-center bg-[#1c0c24] text-[34px] font-bold whitespace-nowrap text-white">股海明灯</div>
      </div>
    </div>
  );
}
